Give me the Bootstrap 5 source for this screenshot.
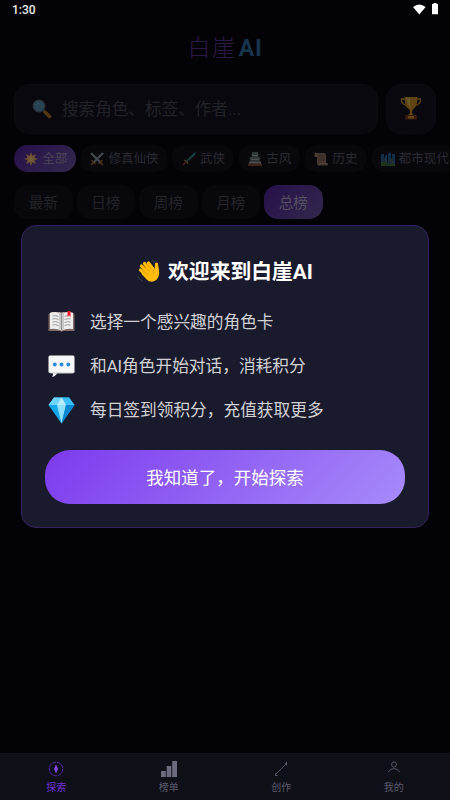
<!DOCTYPE html>
<html lang="zh-CN">
<head>
<meta charset="utf-8">
<meta name="viewport" content="width=device-width, initial-scale=1">
<title>白崖AI</title>
<link href="https://cdn.jsdelivr.net/npm/bootstrap@5.3.0/dist/css/bootstrap.min.css" rel="stylesheet">
<style>
html,body{height:100%}
body{background:#030207;font-family:Roboto,"Noto Sans CJK SC",sans-serif;color:#fff;overflow:hidden;line-height:1.2}
svg{display:block;flex:none}
.phone{height:800px;width:450px;background:#030207}
.statusbar{height:20px;padding:0 11px 0 12px;font-size:12px;font-weight:500;color:#eee}
.brand{height:64px;padding-bottom:7px;font-size:23px;letter-spacing:1.6px;color:#2d1a43;font-weight:300}
.brand b{color:#17344a;letter-spacing:.8px;font-weight:700;margin-left:2px}
.searchrow{padding:0 14px;gap:8px;height:50px}
.field{background:#08080e;border:1px solid #0c0b12;border-radius:15px}
.searchbox{padding-left:17px;gap:10px;font-size:16.6px;color:#222229}
.searchbox span{padding-top:2px}
.cup{width:50px;padding-bottom:3px}
.chips{padding:11px 0 0 14px;gap:4px;font-size:12.5px;color:#2b2b32;width:450px}
.chip{height:27px;border-radius:14px;background:#07070c;padding:0 9px 0 10px;gap:4.3px;white-space:nowrap;flex:none}
.ranks{padding:13px 0 0 14px;gap:4px;font-size:14.6px;color:#232329}
.rank{width:58.5px;height:34px;border-radius:14px;background:#07070c;padding-top:3px}
.lit{background:linear-gradient(135deg,#26104a,#32284c);color:#55505e}
.chip.lit{color:#4b4656}
.welcome{position:absolute;left:21px;top:225px;width:408px;height:303px;background:#1a1a2d;border:1px solid #35215f;border-radius:15px;padding:33px 23px 0}
.welcome h1{font-size:20.8px;font-weight:700;height:24px;line-height:24px;gap:7px;margin-bottom:17px}
.welcome h1 span{padding-top:1px}
.tip{height:44px;padding-left:3px;gap:15px;font-size:16.7px;color:#d2d2d6}
.tip span{padding-top:2px}
.start{margin-top:18px;height:54px;border-radius:25px;border:0;background:linear-gradient(135deg,#7c3aed,#a78bfa)!important;color:#fff!important;font-size:17.5px;padding:2px 0 0}
.tabs{position:absolute;left:0;bottom:0;width:450px;height:47px;background:#0f0f18;border-top:1px solid #12111b;color:#5a5a6c;font-size:10px}
.tabs>div{gap:5px;padding-top:7px}
.tabs .now{color:#6d30d0}
.dim{opacity:.34}
.cup .dim{opacity:.42}
</style>
<script src="https://cdn.jsdelivr.net/npm/bootstrap@5.3.0/dist/js/bootstrap.bundle.min.js"></script>
</head>
<body>
<main class="phone position-relative overflow-hidden">
  <div class="statusbar d-flex justify-content-between align-items-center">
    <span>1:30</span>
    <svg width="26" height="14" viewBox="0 0 26 14" fill="#fff"><path d="M0 4Q6.300-1.200 12.600 4L6.300 11.500Z"/><path d="M20.500 1V-.3h3V1H25V11.200h-6V1Z"/></svg>
  </div>
  <header class="brand d-flex justify-content-center align-items-center"><span>白崖</span><b>AI</b></header>
  <div class="searchrow d-flex">
    <div class="field searchbox d-flex align-items-center flex-grow-1">
      <svg class="dim" width="20" height="20" viewBox="0 0 20 20"><path d="M13 13l4.500 4.500" stroke="#e58b12" stroke-width="3.600" stroke-linecap="round"/><path d="M10.500 10.500l2 2" stroke="#78909c" stroke-width="2"/><circle cx="7" cy="7" r="5.800" fill="#66b9d6" stroke="#6e8793" stroke-width="1.300"/><path d="M4 6q1-2 3-2" stroke="#b8e7f5" fill="none"/></svg>
      <span>搜索角色、标签、作者...</span>
    </div>
    <div class="field cup d-flex align-items-center justify-content-center">
      <svg class="dim" width="22" height="24" viewBox="0 0 22 24"><path d="M5 3H1.500C1 6 3 9 7 9.500M17 3h3.500C21 6 19 9 15 9.500" fill="none" stroke="#d3971b" stroke-width="1.400"/><path d="M4.500 1h13c0 6-1.500 11-5 12.500L12 17l2 2.500H8l2-2.500-.500-3.500C6 12 4.500 7 4.500 1Z" fill="#d89a1d"/><path d="M7 2h3v9Q7.500 8 7 2Z" fill="#f5c954"/><path d="M5.500 19h11l.5 4.500H5Z" fill="#86350f"/><path d="M8 20h6v2.500H8Z" fill="#dd9820"/></svg>
    </div>
  </div>
  <div class="chips d-flex overflow-hidden">
    <div class="chip lit d-flex align-items-center"><svg class="dim" width="14" height="14" viewBox="0 0 14 14"><path d="M7 0l1.300 3.800L12 2l-1.500 3.500L14 7l-3.500 1.300L12 12 8.500 10.300 7 14 5.500 10.300 2 12l1.500-3.700L0 7l3.500-1.500L2 2l3.700 1.800Z" fill="#e8b000"/><path d="M7 2.500l1.300 2.800 3 .3-2.200 2 .6 3L7 9l-2.700 1.600.6-3-2.200-2 3-.3Z" fill="#ffd91a"/></svg><span>全部</span></div>
    <div class="chip d-flex align-items-center"><svg class="dim" width="14" height="14" viewBox="0 0 14 14"><path d="M1 1l10 10M13 1L3 11" stroke="#a9c0c5" stroke-width="2.400"/><path d="M1.500 8l4 4M12.500 8l-4 4" stroke="#d98c25" stroke-width="1.300"/><path d="M3 11l-2 2M11 11l2 2" stroke="#a9653a" stroke-width="1.800"/></svg><span>修真仙侠</span></div>
    <div class="chip d-flex align-items-center"><svg class="dim" width="14" height="14" viewBox="0 0 14 14"><path d="M4 9l8-8 2-1-1 3-8 7Z" fill="#38b8b5"/><path d="M2.500 8l3.500 3.500" stroke="#e7ad31" stroke-width="1.300"/><path d="M4 10l-3 3" stroke="#b24138" stroke-width="1.700"/></svg><span>武侠</span></div>
    <div class="chip d-flex align-items-center"><svg class="dim" width="14" height="14" viewBox="0 0 14 14"><path d="M4 0h6v1.500l1.500 1.500h-9L4 1.500Z" fill="#7d9693"/><path d="M4 3h6v1.500H4Z" fill="#e4dfd0"/><path d="M3 4.500h8l2 2.500H1Z" fill="#7d9693"/><path d="M2.500 7h9v1.500h-9Z" fill="#e4dfd0"/><path d="M2 8.500h10l1 1.500H1Z" fill="#7d9693"/><path d="M1 10h12v1.800H1Z" fill="#d8d5c8"/><path d="M0 11.500h14V14H0Z" fill="#a9593c"/></svg><span>古风</span></div>
    <div class="chip d-flex align-items-center"><svg class="dim" width="14" height="14" viewBox="0 0 14 14"><path d="M1 1h9q2 0 2 2v8h1q1 0 1 1t-1 1.500H5q-2 0-2-2V5H1Q-.500 3 1 1Z" fill="#b78e6c"/><path d="M5 4h5M5 6h5M5 8h5" stroke="#795b4b" stroke-width=".7"/><path d="M1 1q2 0 2 4M5 13.500q1-1 0-2h8" fill="none" stroke="#deb78f"/></svg><span>历史</span></div>
    <div class="chip d-flex align-items-center"><svg class="dim" width="14" height="14" viewBox="0 0 14 14"><path d="M0 2h3v10H0ZM4 4l2-2v10H4ZM7 2l3-2v12H7ZM11 2h3v10h-3Z" fill="#247dbd"/><path d="M2 6l2-1 1 7H2ZM8 6h4v6H8Z" fill="#45657f"/><path d="M0 11q3-2 6 0t8 0v3H0Z" fill="#478f32"/><path d="M4 8h1M9 8h1M11 10h1" stroke="#e9c246"/></svg><span>都市现代</span></div>
  </div>
  <div class="ranks d-flex">
    <div class="rank d-flex align-items-center justify-content-center">最新</div>
    <div class="rank d-flex align-items-center justify-content-center">日榜</div>
    <div class="rank d-flex align-items-center justify-content-center">周榜</div>
    <div class="rank d-flex align-items-center justify-content-center">月榜</div>
    <div class="rank lit d-flex align-items-center justify-content-center">总榜</div>
  </div>

  <section class="welcome">
    <h1 class="d-flex justify-content-center align-items-center">
      <svg width="24" height="24" viewBox="0 0 24 24"><g stroke="#ffbd0a" stroke-width="3.200" stroke-linecap="round"><path d="M12 14L4.500 7M14 12L7.500 4.500M16 10L11.500 4M9.500 16L3.500 11"/><path d="M19.500 12l0-7"/></g><path d="M5 12L13 5l5 5 3-4c1 5 1.700 8 .7 11-2 6-8 7.500-12 3.500L4.500 15Z" fill="#ffbd0a"/><path d="M6.500 7l6 6M10 5.500l5 5M5 11l6 5M18 10q-3 2-1 5" stroke="#d58b00" stroke-width=".7" fill="none"/><path d="M1 17q1 4 5 5M15 1.500q3 0 3.500 2" stroke="#39434d" stroke-width=".9" fill="none"/></svg>
      <span>欢迎来到白崖AI</span>
    </h1>
    <div class="tip d-flex align-items-center"><svg width="27" height="27" viewBox="0 0 27 27"><path d="M.5 5L3 3h21l2.500 2v17H15l-1.500 1L12 22H.5Z" fill="#806b65"/><path d="M2 4q6-2.500 11.500 1Q19 1.500 25 4v16q-6-1-11.500 1.500Q8 19 2 20Z" fill="#ededed"/><path d="M11 3q1.500.5 2.500 2Q14.500 3.500 16 3v17q-1.500.3-2.500 1.500-1-1.200-2.500-1.500Z" fill="#c8c8c8"/><path d="M13.500 5v16" stroke="#858585" stroke-width=".8"/><path d="M4.500 7q3-1 6 .5M4.500 10q3-1 6 .5M4.500 13q3-1 6 .5M4.500 16q3-1 6 .5M16.500 7.500q2-1 3-.8M16.500 10.500q3-1.500 6-.5M16.500 13.500q3-1.500 6-.5M16.500 16.500q3-1.500 6-.5" stroke="#888" stroke-width=".8" fill="none"/><path d="M19.500 2h3v6L21 6.500 19.500 8Z" fill="#f31935"/></svg><span>选择一个感兴趣的角色卡</span></div>
    <div class="tip d-flex align-items-center"><svg width="27" height="27" viewBox="0 0 27 27"><path d="M2 2.500h23q1.500 0 1.500 1.500v14.500q0 1.500-1.500 1.500H9q-1 3-5 4 1.500-2 1-4H2Q.5 20 .5 18.500V4Q.5 2.500 2 2.500Z" fill="#f7f7f7"/><path d="M1 18.500Q1.300 20 3 20h21.500q1.500 0 1.800-1.500" stroke="#c9c9c9" fill="none"/><g fill="#248be0"><circle cx="6.800" cy="11.500" r="1.900"/><circle cx="13.500" cy="11.500" r="1.900"/><circle cx="20.300" cy="11.500" r="1.900"/></g></svg><span>和AI角色开始对话，消耗积分</span></div>
    <div class="tip d-flex align-items-center"><svg width="27" height="27" viewBox="0 0 27 27"><path d="M6 .5h15L26.500 8l-13 18.500L.5 8Z" fill="#15a6ec"/><path d="M6 .5L.5 8H9l4.500-7.500Z" fill="#6dd4fb"/><path d="M21 .5L26.500 8H18L13.500.5Z" fill="#3bbdf5"/><path d="M13.500.5L9 8l4.500 18.500L18 8Z" fill="#8de1fd"/><path d="M18 8l-4.500 18.500L26.500 8Z" fill="#0787d1"/><path d="M13.500.5L9 8h9Z" fill="#b6edff"/></svg><span>每日签到领积分，充值获取更多</span></div>
    <button class="btn start w-100" type="button">我知道了，开始探索</button>
  </section>

  <nav class="tabs d-flex text-center">
    <div class="now col-3 d-flex flex-column align-items-center"><svg width="16" height="16" viewBox="0 0 16 16"><circle cx="8" cy="8" r="6.800" fill="none" stroke="currentColor" stroke-width=".8" stroke-dasharray="4 .7"/><path d="M8 3.500L10 8l-2 4.500L6 8Z" fill="#8548ef"/></svg><span>探索</span></div>
    <div class="col-3 d-flex flex-column align-items-center"><svg width="16" height="16" viewBox="0 0 16 16" fill="#6b6b80"><path d="M0 10h4.800v6H0ZM5.700 5h4.600v11H5.700ZM11.200 0H16v16h-4.800Z"/></svg><span>榜单</span></div>
    <div class="col-3 d-flex flex-column align-items-center"><svg width="16" height="16" viewBox="0 0 16 16" fill="none" stroke="currentColor" stroke-width=".9"><path d="M3 13L13 3M2 14.500h2.500M2.500 14.500L3 12M12 2.500h2.200M13.500 1v3.500"/></svg><span>创作</span></div>
    <div class="col-3 d-flex flex-column align-items-center"><svg width="16" height="16" viewBox="0 0 16 16" fill="none" stroke="currentColor" stroke-width=".9"><rect x="5.700" y="1" width="4.600" height="5" rx="2"/><path d="M2.300 11Q4 7.600 8 7.600T13.700 11"/></svg><span>我的</span></div>
  </nav>
</main>
</body>
</html>
